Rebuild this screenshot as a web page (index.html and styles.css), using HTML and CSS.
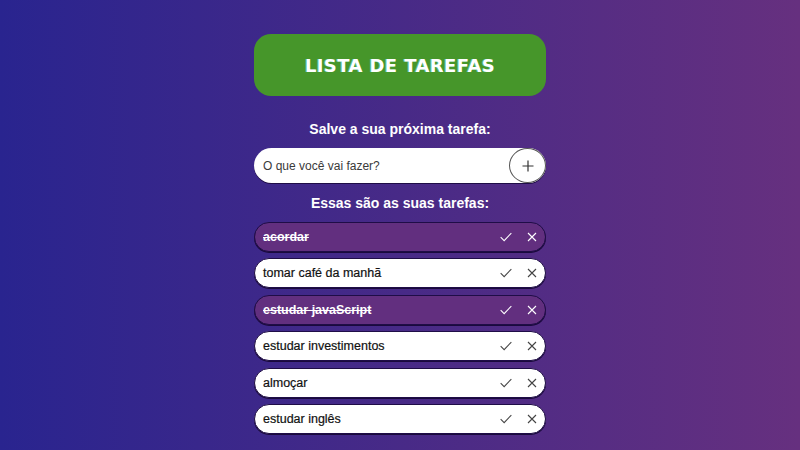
FILE: index.html
```html
<!DOCTYPE html>
<html lang="pt-BR">
<head>
<meta charset="utf-8">
<link rel="stylesheet" href="styles.css">
</head>
<body>
<main class="app">
  <h1 class="title">LISTA DE TAREFAS</h1>
  <h2 class="label">Salve a sua próxima tarefa:</h2>
  <form class="new-task">
    <input class="new-input" type="text" placeholder="O que você vai fazer?">
    <button class="add-btn" type="button" aria-label="Adicionar">
      <svg width="12" height="12" viewBox="0 0 12 12"><path d="M6 0.5v11M0.5 6h11" stroke="#333" stroke-width="1.2" fill="none"/></svg>
    </button>
  </form>
  <h2 class="label label-list">Essas são as suas tarefas:</h2>
  <ul class="tasks">
    <li class="task done"><span class="task-text">acordar</span><span class="icons"><svg class="ic ic-check" viewBox="0 0 13 10"><path d="M0.7 5.2l3.8 3.8 7.8-8.3" /></svg><svg class="ic ic-x" viewBox="0 0 10 10"><path d="M1 1l8 8M9 1l-8 8" /></svg></span></li>
    <li class="task"><span class="task-text">tomar café da manhã</span><span class="icons"><svg class="ic ic-check" viewBox="0 0 13 10"><path d="M0.7 5.2l3.8 3.8 7.8-8.3" /></svg><svg class="ic ic-x" viewBox="0 0 10 10"><path d="M1 1l8 8M9 1l-8 8" /></svg></span></li>
    <li class="task done"><span class="task-text">estudar javaScript</span><span class="icons"><svg class="ic ic-check" viewBox="0 0 13 10"><path d="M0.7 5.2l3.8 3.8 7.8-8.3" /></svg><svg class="ic ic-x" viewBox="0 0 10 10"><path d="M1 1l8 8M9 1l-8 8" /></svg></span></li>
    <li class="task"><span class="task-text">estudar investimentos</span><span class="icons"><svg class="ic ic-check" viewBox="0 0 13 10"><path d="M0.7 5.2l3.8 3.8 7.8-8.3" /></svg><svg class="ic ic-x" viewBox="0 0 10 10"><path d="M1 1l8 8M9 1l-8 8" /></svg></span></li>
    <li class="task"><span class="task-text">almoçar</span><span class="icons"><svg class="ic ic-check" viewBox="0 0 13 10"><path d="M0.7 5.2l3.8 3.8 7.8-8.3" /></svg><svg class="ic ic-x" viewBox="0 0 10 10"><path d="M1 1l8 8M9 1l-8 8" /></svg></span></li>
    <li class="task"><span class="task-text">estudar inglês</span><span class="icons"><svg class="ic ic-check" viewBox="0 0 13 10"><path d="M0.7 5.2l3.8 3.8 7.8-8.3" /></svg><svg class="ic ic-x" viewBox="0 0 10 10"><path d="M1 1l8 8M9 1l-8 8" /></svg></span></li>
  </ul>
</main>
</body>
</html>
```
FILE: styles.css
```css
html, body {
  margin: 0;
  padding: 0;
  height: 100%;
}
body {
  background: linear-gradient(to right, #29248f, #66307f);
  font-family: "Liberation Sans", Arial, sans-serif;
  overflow: hidden;
}
.app {
  width: 292px;
  margin: 0 auto;
  padding-top: 34px;
  display: flex;
  flex-direction: column;
}
.title {
  margin: 0;
  height: 62px;
  background: #46962a;
  border-radius: 17px;
  display: flex;
  align-items: center;
  justify-content: center;
  color: #fff;
  font-family: "Comic Sans MS", "DejaVu Sans", sans-serif;
  font-size: 18px;
  font-weight: bold;
  letter-spacing: 0.4px;
  text-shadow: -1px 0 0 rgba(120, 230, 255, 0.5);
}
.label {
  margin: 0;
  color: #fff;
  font-size: 14px;
  font-weight: bold;
  text-align: center;
  margin-top: 24px;
  line-height: 18px;
}
.label-list {
  margin-top: 11px;
}
.new-task {
  margin: 10px 0 0;
  height: 35px;
  background: #fff;
  border-radius: 18px;
  display: flex;
  align-items: center;
  padding-left: 9px;
  box-sizing: border-box;
  box-shadow: 0 1px 0 #1f0d47;
}
.new-input {
  flex: 1;
  border: none;
  outline: none;
  background: transparent;
  font-family: "Liberation Sans", Arial, sans-serif;
  font-size: 12px;
  color: #333;
  padding: 0;
}
.new-input::placeholder {
  color: #3a3a3a;
}
.add-btn {
  width: 37px;
  height: 35px;
  border-radius: 50%;
  border: 1px solid #555;
  background: #fff;
  padding: 0;
  display: flex;
  align-items: center;
  justify-content: center;
  box-sizing: border-box;
}
.tasks {
  list-style: none;
  margin: 10px 0 0;
  padding: 0;
  display: flex;
  flex-direction: column;
  gap: 6.4px;
}
.task {
  height: 30px;
  box-sizing: border-box;
  background: #fff;
  border-radius: 15px;
  border: 1px solid #1f0d47;
  box-shadow: 0 1px 0 #1a0a3d;
  display: flex;
  align-items: center;
  padding: 0 8px 0 8px;
  font-family: "Liberation Sans", Arial, sans-serif;
  font-size: 12.5px;
  color: #111;
  -webkit-text-stroke: 0.2px #111;
}
.task-text {
  flex: 1;
}
.task.done {
  background: #622f7f;
  color: #fff;
  font-weight: bold;
  -webkit-text-stroke: 0;
}
.task.done .task-text {
  text-decoration: line-through;
}
.icons {
  display: flex;
  align-items: center;
}
.ic {
  fill: none;
  stroke: #444;
  stroke-width: 1.1;
}
.ic-check {
  width: 12px;
  height: 10px;
  margin-right: 15px;
}
.ic-x {
  width: 10px;
  height: 10px;
}
.task.done .ic {
  stroke: #fff;
}
```
